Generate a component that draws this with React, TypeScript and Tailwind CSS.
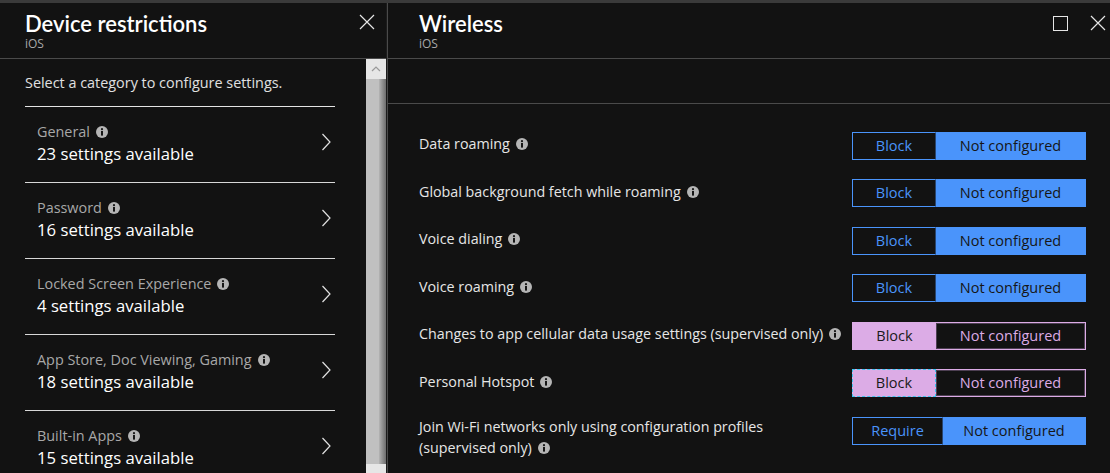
import React from "react";

type Category = { title: string; count: number };

const categories: Category[] = [
  { title: "General", count: 23 },
  { title: "Password", count: 16 },
  { title: "Locked Screen Experience", count: 4 },
  { title: "App Store, Doc Viewing, Gaming", count: 18 },
  { title: "Built-in Apps", count: 15 },
];

type Setting = {
  label: React.ReactNode;
  option: string;
  selected: "option" | "none";
  focused?: boolean;
  tall?: boolean;
};

const settings: Setting[] = [
  { label: "Data roaming", option: "Block", selected: "none" },
  { label: "Global background fetch while roaming", option: "Block", selected: "none" },
  { label: "Voice dialing", option: "Block", selected: "none" },
  { label: "Voice roaming", option: "Block", selected: "none" },
  {
    label: "Changes to app cellular data usage settings (supervised only)",
    option: "Block",
    selected: "option",
  },
  { label: "Personal Hotspot", option: "Block", selected: "option", focused: true },
  {
    label: (
      <>
        Join Wi-Fi networks only using configuration profiles
        <br />
        (supervised only)
      </>
    ),
    option: "Require",
    selected: "none",
    tall: true,
  },
];

function InfoIcon() {
  return (
    <svg width="12" height="12" viewBox="0 0 12 12" className="ml-1.5 inline-block shrink-0 align-[-1px]">
      <circle cx="6" cy="6" r="6" fill="#b5b5b5" />
      <circle cx="6" cy="3.2" r="1.1" fill="#161616" />
      <rect x="5" y="5" width="2" height="4.6" fill="#161616" />
    </svg>
  );
}

function CloseIcon() {
  return (
    <svg width="16" height="16" viewBox="0 0 16 16">
      <path d="M1 1 L15 15 M15 1 L1 15" stroke="#e6e6e6" strokeWidth="1.2" />
    </svg>
  );
}

function Chevron() {
  return (
    <svg width="10" height="18" viewBox="0 0 10 18">
      <path d="M1.5 1 L9 9 L1.5 17" stroke="#e0e0e0" strokeWidth="1.2" fill="none" />
    </svg>
  );
}

function Toggle({ option, selected, focused }: Pick<Setting, "option" | "selected" | "focused">) {
  const optWidth = option === "Require" ? "w-[91px]" : "w-[84px]";
  if (selected === "none") {
    return (
      <div className="flex h-7 w-[234px] shrink-0 border border-[#4a94fb] bg-[#4a94fb] text-[14.5px]">
        <div
          className={`flex ${optWidth} -ml-px -my-px items-center justify-center border border-[#4a94fb] border-r-[#28456f] bg-[#121212] text-[#4a94fb]`}
        >
          {option}
        </div>
        <div className="flex flex-1 items-center justify-center text-[#161616]">Not configured</div>
      </div>
    );
  }
  return (
    <div className="flex h-7 w-[234px] shrink-0 border border-[#dcace6] bg-[#121212] text-[14.5px]">
      <div
        className={
          focused
            ? "flex w-[84px] -ml-px -my-px items-center justify-center border border-dashed border-[#3ec6f0] bg-[#dcace6] text-[#1a1a1a]"
            : "flex w-[83px] items-center justify-center bg-[#dcace6] text-[#1a1a1a]"
        }
      >
        {option}
      </div>
      <div className="flex flex-1 items-center justify-center border border-[#4d3f52] text-[#dcace6]">
        Not configured
      </div>
    </div>
  );
}

export default function App() {
  return (
    <div
      className="flex h-[473px] w-[1110px] overflow-hidden border-t-[3px] border-[#3a3a3a] bg-[#121212] text-white"
      style={{ fontFamily: "'Open Sans', Lato, sans-serif" }}
    >
      {/* left blade */}
      <section className="flex w-[386px] shrink-0 flex-col">
        <header className="flex h-14 shrink-0 items-start justify-between border-b border-[#4a4a4a] pl-[25px] pr-[11px]">
          <div>
            <h1
              className="mt-[7px] text-[22px] font-semibold leading-7 text-white"
              style={{ fontFamily: "Lato, sans-serif" }}
            >
              Device restrictions
            </h1>
            <p className="text-[12px] leading-3 text-[#a9a9a9]">iOS</p>
          </div>
          <div className="mt-[11px]">
            <CloseIcon />
          </div>
        </header>
        <div className="flex min-h-0 flex-1">
          <div className="flex-1 pl-[25px] pr-[31px]">
            <p className="border-b border-[#e4e4e4] pt-[14px] pb-[13px] text-[14.4px] leading-5 text-[#e0e0e0]">
              Select a category to configure settings.
            </p>
            {categories.map((c) => (
              <div
                key={c.title}
                className="flex h-[76px] items-center justify-between border-b border-[#d8d8d8] pl-3"
              >
                <div className="-mt-[1px]">
                  <div className="flex items-center text-[14.4px] leading-5 text-[#a8a8a8]">
                    {c.title}
                    <InfoIcon />
                  </div>
                  <div className="text-[16.7px] leading-6 text-white">{c.count} settings available</div>
                </div>
                <div className="mr-[4px] mb-[6px]">
                  <Chevron />
                </div>
              </div>
            ))}
          </div>
          {/* scrollbar */}
          <div className="flex w-5 shrink-0 flex-col bg-[#e6e6e6]">
            <div className="flex h-5 items-center justify-center">
              <svg width="10" height="6" viewBox="0 0 10 6">
                <path d="M1 5 L5 1 L9 5" stroke="#9a9a9a" strokeWidth="1.2" fill="none" />
              </svg>
            </div>
            <div className="flex h-[385px]">
              <div className="flex-1 bg-[#c0c0c0]" />
              <div className="w-[7px] bg-gradient-to-r from-[#b4b4b4] to-[#6e6e6e]" />
            </div>
          </div>
        </div>
      </section>

      <div className="w-[2px] shrink-0 border-l border-[#1c1c1c] bg-[#4a4a4a]" />

      {/* right blade */}
      <section className="flex flex-1 flex-col">
        <header className="flex h-14 shrink-0 items-start justify-between border-b border-[#4a4a4a] pl-[31px] pr-[4px]">
          <div>
            <h1
              className="mt-[7px] text-[22px] font-semibold leading-7 text-white"
              style={{ fontFamily: "Lato, sans-serif" }}
            >
              Wireless
            </h1>
            <p className="text-[12px] leading-3 text-[#a9a9a9]">iOS</p>
          </div>
          <div className="mt-[12px] flex items-center gap-[22px]">
            <div className="h-[15px] w-[15px] border border-[#e6e6e6]" />
            <CloseIcon />
          </div>
        </header>
        <div className="h-[45px] shrink-0 border-b border-[#4a4a4a]" />
        <div className="pt-[18px] pl-[31px] pr-[24px]">
          {settings.map((s, i) => (
            <div key={i} className="flex h-[47.5px] items-center justify-between">
              <div
                className={
                  s.tall
                    ? "flex-1 pt-[13px] text-[14.3px] leading-[21px] text-[#e6e6e6]"
                    : "flex-1 pb-[4px] text-[14.3px] leading-[21px] text-[#e6e6e6]"
                }
              >
                {s.label}
                <InfoIcon />
              </div>
              <Toggle option={s.option} selected={s.selected} focused={s.focused} />
            </div>
          ))}
        </div>
      </section>
    </div>
  );
}
